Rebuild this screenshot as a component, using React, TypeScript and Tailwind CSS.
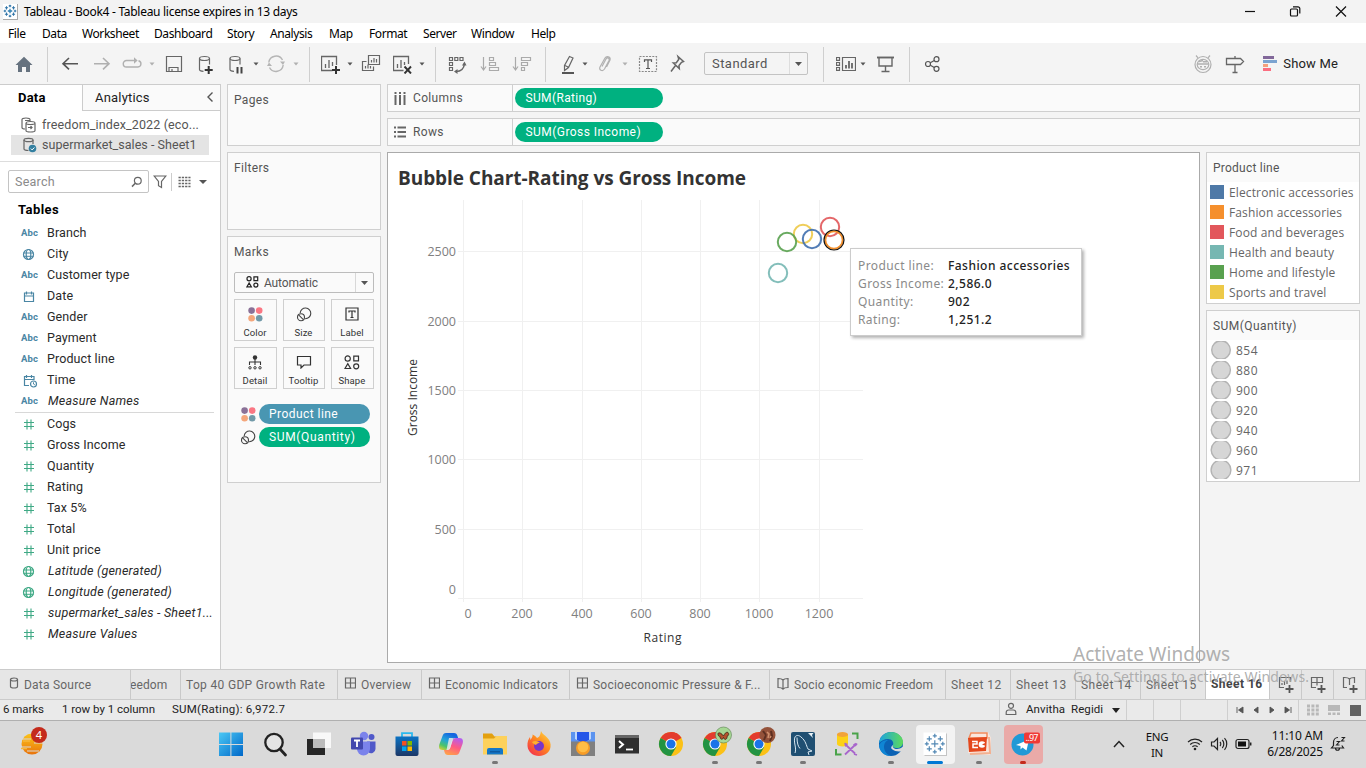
import type { ReactNode } from "react";

const UI = "font-['Roboto',sans-serif]";
const WIN = "font-['Noto_Sans',sans-serif]";

type IconProps = { children: ReactNode; c?: string; w?: number; h?: number; cls?: string };
const Ic = ({ children, c = "#666", w = 20, h = 20, cls = "" }: IconProps) => (
  <svg width={w} height={h} viewBox={`0 0 ${w} ${h}`} fill="none" stroke={c} strokeWidth="1.2" className={`block shrink-0 ${cls}`}>
    {children}
  </svg>
);
const Caret = ({ cls = "", c = "#555" }: { cls?: string; c?: string }) => (
  <Ic w={6} c="none" cls={cls}><path d="M0.5 8.5h5L3 11.5z" fill={c} /></Ic>
);
const Divider = ({ cls }: { cls: string }) => <div className={`-mt-[7px] h-[35px] w-px shrink-0 bg-[#cfcfcf] ${cls}`} />;

function TableauMark({ size, cls = "" }: { size: number; cls?: string }) {
  return (
    <svg width={size} height={size} viewBox="0 0 22 22" stroke="#2f74a8" strokeWidth="1.7" className={`block shrink-0 ${cls}`}>
      <path d="M11 7.500v7M7.500 11h7" strokeWidth="2" stroke="#2f7fb3" />
      <path d="M11 1v4M9 3h4M11 17v4M9 19h4M3 9v4M1 11h4M19 9v4M17 11h4" />
      <path d="M5.500 3.500v5M3 6h5M16.500 3.500v5M14 6h5M5.500 13.500v5M3 16h5M16.500 13.500v5M14 16h5" />
    </svg>
  );
}

function TitleBar() {
  return (
    <div className={`flex h-[23px] items-center bg-[#f3f3f3] ${WIN}`}>
      <div className="ml-[3px] flex h-4 w-[15px] items-center justify-center border-r border-b border-[#aaa] bg-white">
        <TableauMark size={14} />
      </div>
      <span className="ml-[6px] text-[12px] tracking-[-0.29px] text-black">Tableau - Book4 - Tableau license expires in 13 days</span>
      <Ic c="#111" w={12} h={12} cls="ml-auto"><path d="M1 5.500h10" /></Ic>
      <Ic c="#111" w={12} h={12} cls="ml-[33px]"><rect x="1.500" y="3" width="7" height="7" rx="1" /><path d="M4 .8h5a1.800 1.800 0 0 1 1.800 1.800v5" /></Ic>
      <Ic c="#111" w={12} h={12} cls="mr-[19px] ml-[34px]"><path d="M1 .5l10 10M11 .5L1 10.500" /></Ic>
    </div>
  );
}

function MenuBar() {
  return (
    <div className={`flex h-5 items-center bg-white pt-px text-[12px] tracking-[-0.42px] text-black ${WIN}`}>
      <span className="ml-2 w-[34px]">File</span><span className="w-10">Data</span><span className="w-[72px]">Worksheet</span>
      <span className="w-[73px]">Dashboard</span><span className="w-[43px]">Story</span><span className="w-[59px]">Analysis</span>
      <span className="w-10">Map</span><span className="w-[54px]">Format</span><span className="w-12">Server</span>
      <span className="w-[60px]">Window</span><span>Help</span>
    </div>
  );
}

function Toolbar() {
  return (
    <div className={`flex h-[41px] items-start bg-[#f4f4f4] pt-[11px] ${UI}`}>
      <Ic c="none" cls="ml-[14px]"><path d="M1.500 11L10 2.700 18.500 11H16v7h-4v-5H8v5H4v-7z" fill="#66727f" /></Ic>
      <Divider cls="ml-[13px]" />
      <Ic c="#555" cls="ml-3"><path d="M18 9.700H3M9 4L3 9.700l6 5.700" strokeWidth="1.600" /></Ic>
      <Ic c="#b0b0b0" cls="ml-3"><path d="M2 9.700h15M11 4l6 5.700-6 5.700" strokeWidth="1.600" /></Ic>
      <Ic c="#b0b0b0" cls="ml-[10px]"><path d="M7.500 6.500h-3a3.200 3.200 0 0 0 0 6.500h11.500a3.200 3.200 0 0 0 .5-6.300M7.500 6.500h6.500" strokeWidth="1.400" /><path d="M12 3.200l3.600 3.300L12 9.800z" fill="#b0b0b0" stroke="none" /></Ic>
      <Caret cls="ml-[7px]" c="#b0b0b0" />
      <Ic cls="ml-[9px]"><path d="M2.500 2.500h15v15h-15zM5 17v-3.500h9V17M8 17v-2" /></Ic>
      <Ic cls="ml-3"><ellipse cx="8.500" cy="4.500" rx="5" ry="2" /><path d="M3.500 4.500v11c0 1 2 1.700 4 1.900M13.500 4.500v6" /><path d="M12.700 12v8M8.700 16h8" stroke="#333" strokeWidth="2" /></Ic>
      <Ic cls="ml-[10px]"><ellipse cx="9" cy="4.500" rx="5" ry="2" /><path d="M4 4.500v11c0 1 2 1.700 4 1.900M14 4.500v6" /><path d="M11.500 13v6.500M15.500 13v6.500" stroke="#444" strokeWidth="2" /></Ic>
      <Caret cls="ml-[7px]" />
      <Ic c="#b5b5b5" cls="ml-[7px]"><path d="M2.800 8.500A7.300 7.300 0 0 1 16.500 6M17.200 11A7.300 7.300 0 0 1 3.500 13.500" strokeWidth="1.400" /><path d="M14 7.500h5L17 11zM1 12h5L3 8.500z" fill="#b5b5b5" stroke="none" /></Ic>
      <Caret cls="ml-[7px]" c="#b0b0b0" />
      <Divider cls="ml-[10px]" />
      <Ic cls="ml-[11px]"><path d="M15.500 11V2.500h-15v14h11M4.500 14V10M8 14V6M11.500 12V8" strokeWidth="1.300" /><path d="M15 12v8M11 16h8" stroke="#333" strokeWidth="2" /></Ic>
      <Caret cls="ml-[6px]" />
      <Ic cls="ml-2"><path d="M7.500 1.500h11v9h-11zM10.500 8.500V6M13 8.500V4M15.500 8.500V5M5.500 7.500h-4v9h11v-4M4.500 14.500V12M7 14.500V10.500M9.500 14.500V12" /></Ic>
      <Ic cls="ml-3"><path d="M15.500 10V2.500h-15v14h10M4.500 14V10M8 14V6M11.500 11V8" strokeWidth="1.300" /><path d="M11.500 12.500l6.500 7M18 12.500l-6.500 7" stroke="#333" strokeWidth="1.900" /></Ic>
      <Caret cls="ml-[6px]" />
      <Divider cls="ml-[10px]" />
      <Ic cls="ml-[11px]"><path d="M2.500 3.500h3v3h-3zM7.800 3.500h3v3h-3zM13 3.500h3v3h-3zM2.500 8.500h3v3h-3zM2.500 13.500h3v3h-3z" /><path d="M9 17.500c5 0 8-3 8.500-8" strokeWidth="1.500" /><path d="M7 17.500l3.500-2.500v5zM17.500 7.500l2 4H15z" fill="#666" stroke="none" /></Ic>
      <Ic c="#aaa" cls="ml-[13px]"><path d="M3.500 3v12M1 12.500l2.500 3.500L6 12.500M9.500 3.500h4v3h-4zM9.500 8.500h6v3h-6zM9.500 13.500h9v3h-9z" /></Ic>
      <Ic c="#aaa" cls="ml-3"><path d="M3.500 3v12M1 12.500l2.500 3.500L6 12.500M9.500 3.500h9v3h-9zM9.500 8.500h6v3h-6zM9.500 13.500h3v3h-3z" /></Ic>
      <Divider cls="ml-[13px]" />
      <Ic cls="ml-3"><path d="M11.500 2.500l3.500 1.500-4.500 9.500-4 3 0-5zM7 11.500l3.500 1.700" /><path d="M4 19h12" strokeWidth="2" stroke="#555" /></Ic>
      <Caret cls="ml-1" />
      <Ic c="#b0b0b0" cls="ml-[7px]"><path d="M7 12.500l4-7.500c1.300-2 4-.8 3 1.500l-4.500 8.500c-2 3-6 1-4.500-2l5-9c1.500-2.500 6-1.500 5 2l-3.500 7" /></Ic>
      <Caret cls="ml-[7px]" c="#b0b0b0" />
      <Ic cls="ml-[10px]"><path d="M1.500 2.500h17v15h-17z" strokeDasharray="2 1.200" stroke="#888" /><path d="M6.500 8V5.800h7V8M10 6v8.500M8 14.500h4" stroke="#555" /></Ic>
      <Ic cls="ml-[9px]"><path d="M11 2.500l5.500 5-2 .8-2.500 3.200.3 3-6-5.500 3-.2 2.500-3.500zM8.500 11.500L4 17.500" strokeWidth="1.500" /></Ic>
      <div className="-mt-[2px] ml-[17px] flex h-[23px] w-[104px] items-center rounded-[2px] border border-[#c3c3c3] pl-[7px] text-[13px] tracking-[0.450px] text-[#555]">
        Standard
        <div className="ml-auto flex h-full w-[18px] items-center justify-center border-l border-[#ddd]"><svg width="7" height="4" className="block"><path d="M0 0h7L3.500 4z" fill="#555" /></svg></div>
      </div>
      <Divider cls="ml-[15px]" />
      <Ic cls="ml-3"><path d="M.5 3.500h3v2.800h-3zM.5 8.500h3v2.800h-3zM.5 13.500h3v2.800h-3zM6.500 3.500h13v13h-13z" /><path d="M10 14.500v-3.500M13 14.500V7M16 14.500V9" strokeWidth="1.800" /></Ic>
      <Caret cls="ml-1" />
      <Ic cls="ml-[10px]"><path d="M1 3.500h17" strokeWidth="1.900" /><path d="M3 3.500v8.500h13V3.500M9.500 12v5.500M5.500 17.500h8" strokeWidth="1.400" /></Ic>
      <Divider cls="ml-[13px]" />
      <Ic c="#555" cls="ml-3"><circle cx="6" cy="10" r="2.500" /><circle cx="14.500" cy="5.200" r="2.500" /><circle cx="14.500" cy="14.800" r="2.500" /><path d="M8.300 8.800l4-2.300M8.300 11.200l4 2.300" /></Ic>
      <Ic c="#b0b0b0" cls="ml-auto"><circle cx="10" cy="10.500" r="8" /><ellipse cx="10" cy="10.500" rx="5.800" ry="5.200" /><path d="M3 1.500l2 2.300M17 1.500l-2 2.300" /><path d="M4.500 10h11M7 12.700h2M11 12.700h2M6 7.500l4-1M10 7.700h4" strokeWidth="1.600" /></Ic>
      <Ic cls="ml-3"><path d="M1.500 4.500h14l3 3-3 3h-14zM10 2v2.500M10 10.500v8M7.500 18.500h5" strokeWidth="1.300" /></Ic>
      <svg width="14" height="20" className="ml-[18px] block shrink-0"><path d="M0 2h11v3H0z" fill="#82689a" /><path d="M0 6h14v3H0z" fill="#7ba3d0" /><path d="M0 10h5v3H0z" fill="#f4a07c" /><path d="M0 14h8v3H0z" fill="#fb6e80" /></svg>
      <span className="mr-[28px] ml-[6px] text-[13px] leading-[19px] tracking-[0.170px] whitespace-nowrap text-[#222]">Show Me</span>
    </div>
  );
}

const Abc = () => <span className="w-5 text-[9.500px] font-bold tracking-[0.100px] text-[#4a86a4]">Abc</span>;
const Globe = ({ c }: { c: string }) => (
  <span className="w-5"><Ic c={c} w={13} h={13} cls="ml-[1px]"><circle cx="6.500" cy="6.500" r="5" /><ellipse cx="6.500" cy="6.500" rx="2.300" ry="5" /><path d="M1.500 5h10M1.500 8.300h10" strokeWidth="1" /></Ic></span>
);
const Hash = () => <span className="w-5"><Ic c="#3fa985" w={12} h={12} cls="ml-[2px]"><path d="M4 .5v10M8 .5v10M1 3.500h10M1 7.500h10" strokeWidth="1.100" /></Ic></span>;
const Cal = ({ clock }: { clock?: boolean }) => (
  <span className="w-5"><Ic c="#4a86a4" w={15} h={14} cls="ml-[2px]">
    {clock ? <><path d="M11 6V2.500H1.500v9H6M1.500 5.500H11M3.500 1v3M8.500 1v3" /><circle cx="10.500" cy="10" r="3" /><path d="M10.500 8.300V10l1.300.8" strokeWidth="1" /></> : <path d="M1.500 3h9v8.500h-9zM1.500 6h9M3.500 1.500v3M8.500 1.500v3" />}
  </Ic></span>
);
const Row = ({ icon, t, it }: { icon: ReactNode; t: string; it?: boolean }) => (
  <div className="flex h-[21px] items-center pl-[21px]">{icon}<span className={`whitespace-nowrap ${it ? "ml-[7px] tracking-[0.220px] italic" : "ml-[6px] tracking-[0.100px]"}`}>{t}</span></div>
);

function DataPane() {
  return (
    <aside className={`flex w-[221px] shrink-0 flex-col border-t border-r border-[#ccc] bg-white text-[12.500px] text-[#2a2a2a] ${UI}`}>
      <div className="flex h-[26px] text-[13px]">
        <div className="w-[82px] pt-[2px] pl-[18px] leading-[21px] font-bold tracking-[0.200px] text-black">Data</div>
        <div className="flex flex-1 items-center border-b border-l border-[#ccc] bg-[#fafafa] pl-3 tracking-[0.200px] text-[#222]">
          Analytics
          <Ic c="#555" w={8} h={12} cls="mr-[6px] mb-[2px] ml-auto"><path d="M6.500 1.500L2 6l4.500 4.500" strokeWidth="1.400" /></Ic>
        </div>
      </div>
      <div className="flex h-[51px] flex-col border-b border-[#ddd] pt-1 text-[#555]">
        <div className="mx-[11px] flex h-5 items-center pl-[10px]">
          <Ic w={15} h={16}><path d="M9 4V2.500C9 1.500 7.500 1 5 1S1 1.500 1 2.500v8C1 11.500 2 12 4 12M4 3.500h5M5 6.500C5 5 7 4.500 9.500 4.500s4.500.5 4.500 1.500-2 1.500-4.500 1.500S5 7 5 6zM5 6.500v7c0 1 2 1.500 4.500 1.500s4.500-.5 4.500-1.500v-7" /><path d="M7 10.500h4M9.500 9l1.500 1.500L9.500 12" /></Ic>
          <span className="ml-[6px] tracking-[0.130px]">freedom_index_2022 (eco...</span>
        </div>
        <div className="mx-[11px] flex h-5 items-center bg-[#e4e4e4] pl-3">
          <Ic w={14} h={16}><path d="M5.500 13.500C3 13.500 1 13 1 12V3M10 7V3" /><ellipse cx="5.500" cy="3" rx="4.500" ry="1.700" /><circle cx="9.500" cy="11.500" r="3.800" fill="#337fa0" stroke="none" /><path d="M7.800 11.600l1.300 1.300 2.300-2.400" stroke="#fff" strokeWidth="1" /></Ic>
          <span className="ml-[5px] tracking-[0.040px] whitespace-nowrap">supermarket_sales - Sheet1</span>
        </div>
      </div>
      <div className="flex h-[39px] items-center pl-2">
        <div className="flex h-[23px] w-[141px] items-center rounded-[2px] border border-[#c4c4c4] pt-px pl-[6px] tracking-[0.250px] text-[#8a8a8a]">
          Search
          <Ic w={12} h={12} cls="mr-[5px] ml-auto"><circle cx="6.800" cy="4.800" r="3.400" /><path d="M4.300 7.300L1 10.600" strokeWidth="1.500" /></Ic>
        </div>
        <Ic w={14} h={14} cls="ml-1"><path d="M1.200 1h11.600L8.500 6.500v6l-3-1.800V6.500z" /></Ic>
        <div className="ml-[4px] h-[18px] w-px bg-[#ccc]" />
        <Ic w={13} h={12} cls="ml-[6px]"><path d="M.5 1.500h12M.5 4.500h12M.5 7.500h12M.5 10.500h12" strokeDasharray="2.300 1" strokeWidth="1.300" /></Ic>
        <svg width="8" height="4" className="ml-2 block"><path d="M0 0h8L4 4z" fill="#555" /></svg>
      </div>
      <div className="h-[22px] pl-[18px] text-[13px] leading-[18px] font-bold tracking-[0.450px] text-black">Tables</div>
      <Row icon={<Abc />} t="Branch" /><Row icon={<Globe c="#4a86a4" />} t="City" /><Row icon={<Abc />} t="Customer type" />
      <Row icon={<Cal />} t="Date" /><Row icon={<Abc />} t="Gender" /><Row icon={<Abc />} t="Payment" />
      <Row icon={<Abc />} t="Product line" /><Row icon={<Cal clock />} t="Time" /><Row icon={<Abc />} t="Measure Names" it />
      <div className="mr-[6px] ml-[15px] h-[2px] border-t border-[#d8d8d8]" />
      <Row icon={<Hash />} t="Cogs" /><Row icon={<Hash />} t="Gross Income" /><Row icon={<Hash />} t="Quantity" />
      <Row icon={<Hash />} t="Rating" /><Row icon={<Hash />} t="Tax 5%" /><Row icon={<Hash />} t="Total" />
      <Row icon={<Hash />} t="Unit price" /><Row icon={<Globe c="#3fa985" />} t="Latitude (generated)" it />
      <Row icon={<Globe c="#3fa985" />} t="Longitude (generated)" it />
      <Row icon={<Hash />} t="supermarket_sales - Sheet1..." it /><Row icon={<Hash />} t="Measure Values" it />
    </aside>
  );
}

const Dots = () => (
  <svg width="15" height="15" className="block shrink-0"><circle cx="3.600" cy="3.600" r="3.300" fill="#8a7197" /><circle cx="11.200" cy="3.600" r="3.300" fill="#fa7683" /><circle cx="3.600" cy="11.200" r="3.300" fill="#f4a67b" /><circle cx="11.200" cy="11.200" r="3.300" fill="#7199a8" /></svg>
);
const SizeIc = ({ c = "#444" }: { c?: string }) => (
  <Ic w={16} h={16} c={c}><path d="M4.200 7a5.300 5.300 0 1 1 5 5.600" strokeWidth="1.100" /><circle cx="5" cy="11.200" r="3.500" strokeWidth="1.100" /><path d="M2.600 8.800l4.800 4.800" strokeWidth="1.100" /></Ic>
);
const ShapeIc = () => (
  <Ic w={16} h={15} c="#333"><circle cx="3.700" cy="3.500" r="2.600" /><path d="M9.800 1.200h4.700v4.700H9.800zM1 13.500h5.600L3.800 8.600z" /><circle cx="12.200" cy="11.300" r="2.500" /></Ic>
);
const MarkBtn = ({ icon, t, cls }: { icon: ReactNode; t: string; cls: string }) => (
  <div className={`flex h-[42px] flex-col items-center border border-[#cfcfcf] pt-[6px] text-[9.500px] text-[#333] ${cls}`}>
    <div className="-ml-px flex h-4 items-center">{icon}</div>
    <span className="mt-[5px] -ml-px leading-[12px] tracking-[0.100px]">{t}</span>
  </div>
);
const Card = ({ t, cls, children }: { t: string; cls: string; children?: ReactNode }) => (
  <section className={`border border-[#cfcfcf] bg-[#fafafa] text-[12px] text-[#555] ${cls}`}>
    <h2 className="pt-[6px] pl-[6px] leading-[18px] tracking-[0.330px]">{t}</h2>
    {children}
  </section>
);

function Cards() {
  return (
    <div className={`ml-[6px] flex w-[154px] shrink-0 flex-col ${UI}`}>
      <Card t="Pages" cls="h-[62px]" />
      <Card t="Filters" cls="mt-[6px] h-[78px]" />
      <Card t="Marks" cls="mt-[6px] h-[247px]">
        <div className="mt-[11px] ml-[6px] flex h-[21px] w-[140px] items-center rounded-[2px] border border-[#bcbcbc] pl-[11px]">
          <svg width="13" height="12" viewBox="0 0 16 15" fill="none" stroke="#222" strokeWidth="1.500" className="mb-px block"><circle cx="3.700" cy="3.500" r="2.600" /><path d="M9.800 1.200h4.700v4.700H9.800zM1 13.500h5.600L3.800 8.600z" /><circle cx="12.200" cy="11.300" r="2.500" /></svg>
          <span className="ml-[5px] pt-px text-[12px] tracking-[-0.160px]">Automatic</span>
          <div className="ml-auto flex h-full w-[18px] items-center justify-center border-l border-[#d8d8d8]"><svg width="7" height="4" className="block"><path d="M0 0h7L3.500 4z" fill="#555" /></svg></div>
        </div>
        <div className="mt-[6px] ml-[6px] flex gap-[6px]">
          <MarkBtn cls="w-[43px]" t="Color" icon={<Dots />} />
          <MarkBtn cls="w-[42px]" t="Size" icon={<SizeIc />} />
          <MarkBtn cls="w-[43px]" t="Label" icon={<Ic w={14} h={14} c="#333"><path d="M1 1h12v12H1zM4 5.500V4h6v1.500M7 4v6.500M5.500 10.500h3" /></Ic>} />
        </div>
        <div className="mt-[6px] ml-[6px] flex gap-[6px]">
          <MarkBtn cls="w-[43px]" t="Detail" icon={<Ic w={14} h={15} c="#333"><circle cx="7" cy="2.500" r="2.200" fill="#333" stroke="none" /><path d="M7 4v6M1.500 10V7h11v3" strokeWidth="1.100" /><circle cx="2" cy="12.800" r="1.200" strokeWidth="1" /><circle cx="7" cy="12.800" r="1.200" strokeWidth="1" /><circle cx="12" cy="12.800" r="1.200" strokeWidth="1" /></Ic>} />
          <MarkBtn cls="w-[42px]" t="Tooltip" icon={<Ic w={16} h={14} c="#333"><path d="M1.500 1.500h13v8.500H8l-3 3V10H1.500z" strokeWidth="1.200" /></Ic>} />
          <MarkBtn cls="w-[43px]" t="Shape" icon={<ShapeIc />} />
        </div>
        <div className="mt-[15px] flex h-5 items-center pl-[13px]">
          <Dots /><span className="ml-[3px] h-5 w-[111px] rounded-full bg-[#4996b2] pl-[10px] text-[12px] leading-5 tracking-[0.450px] text-white">Product line</span>
        </div>
        <div className="mt-[3px] flex h-5 items-center pl-[12px]">
          <SizeIc /><span className="ml-[3px] h-5 w-[111px] rounded-full bg-[#00b180] pl-[10px] text-[12px] leading-5 tracking-[0.650px] text-white">SUM(Quantity)</span>
        </div>
      </Card>
    </div>
  );
}

const Shelf = ({ icon, t, pill, cls = "", tr }: { icon: ReactNode; t: string; pill: string; cls?: string; tr: string }) => (
  <div className={`flex h-[28px] items-center border border-[#cfcfcf] bg-[#fafafa] text-[12px] text-[#555] ${UI} ${cls}`}>
    <div className="flex h-full w-[125px] items-center border-r border-[#cfcfcf] pl-[6px]">{icon}<span className="ml-[6px] tracking-[0.350px]">{t}</span></div>
    <span className={`ml-[2px] h-5 w-[148px] rounded-full bg-[#00b180] pl-[10.500px] leading-5 text-white ${tr}`}>{pill}</span>
  </div>
);

const yTicks: [string, number][] = [["2500", 98.5], ["2000", 168.5], ["1500", 237.5], ["1000", 306.5], ["500", 376.5]];
const xTicks: [string, number][] = [["200", 134.5], ["400", 194.5], ["600", 253.5], ["800", 312.5], ["1000", 371.5], ["1200", 431.500]];
const bubbles: [number, number, string][] = [[415, 81, "#edc948"], [399, 89, "#59a14f"], [424, 86, "#3f6fae"], [442, 74, "#e15759"], [390, 120, "#76b7b2"]];

function Chart() {
  return (
    <svg width="811" height="509" className="block font-['Open_Sans',sans-serif]" fontSize="12.500">
      <text x="10" y="32" fontSize="19" fontWeight="700" fill="#333" textLength="348">Bubble Chart-Rating vs Gross Income</text>
      <path d="M75.500 47v402" stroke="#f0f0f0" />
      {xTicks.map(([t, x]) => <path key={t} d={`M${x} 47v402`} stroke="#f0f0f0" />)}
      {yTicks.map(([t, y]) => <path key={t} d={`M70 ${y}h405`} stroke="#f0f0f0" />)}
      <path d="M70 445.500h405" stroke="#f0f0f0" />
      <g fill="#808080" textAnchor="end">
        {yTicks.map(([t, y]) => <text key={t} x="68" y={y + 4.500}>{t}</text>)}
        <text x="68" y="441">0</text>
      </g>
      <g fill="#808080" textAnchor="middle">
        <text x="80" y="465">0</text>
        {xTicks.map(([t, x]) => <text key={t} x={x - 0.500} y="465">{t}</text>)}
      </g>
      <text x="255.500" y="489" textLength="38" fontSize="12" fill="#333">Rating</text>
      <text transform="translate(29 283) rotate(-90)" textLength="77" fontSize="12" fill="#333">Gross Income</text>
      {bubbles.map(([x, y, c]) => <circle key={c} cx={x} cy={y} r="9.200" fill="none" stroke={c} strokeWidth="2" strokeOpacity=".9" />)}
      <circle cx="446" cy="87" r="8.700" fill="none" stroke="#f28e2b" strokeWidth="2" />
      <circle cx="446" cy="87" r="10" fill="none" stroke="#111" strokeWidth="1.200" />
    </svg>
  );
}

const tip: [string, string][] = [["Product line:", "Fashion accessories"], ["Gross Income:", "2,586.0"], ["Quantity:", "902"], ["Rating:", "1,251.2"]];

function Tooltip() {
  return (
    <div className="absolute top-[95px] left-[462px] h-[88px] w-[232px] border border-[#ccc] bg-white pt-[8px] pl-[7px] font-['Noto_Sans',sans-serif] text-[12px] shadow-[2px_2px_3px_rgba(0,0,0,0.3)]">
      {tip.map(([k, v]) => (
        <div key={k} className="flex h-[18px] items-center whitespace-nowrap">
          <span className="w-[90px] tracking-[0.400px] text-[#8a8a8a]">{k}</span>
          <span className="font-medium tracking-[0.460px] text-[#222]">{v}</span>
        </div>
      ))}
    </div>
  );
}

const legend = [
  ["Electronic accessories", "bg-[#4e79a7]"], ["Fashion accessories", "bg-[#f58f2d]"], ["Food and beverages", "bg-[#e2575b]"],
  ["Health and beauty", "bg-[#76b7b2]"], ["Home and lifestyle", "bg-[#59a14f]"], ["Sports and travel", "bg-[#edc948]"],
];

function Legends() {
  return (
    <div className="ml-[6px] flex w-[154px] flex-col gap-[6px] text-[12px] text-[#666]">
      <section className="h-[152px] border border-[#cfcfcf] bg-white">
        <h2 className={`h-[29px] bg-[#fafafa] pt-[6px] pl-[6px] leading-[18px] tracking-[0.230px] text-[#555] ${UI}`}>Product line</h2>
        {legend.map(([t, c]) => (
          <div key={t} className="flex h-5 items-center pl-[3px] font-['Open_Sans',sans-serif] whitespace-nowrap">
            <span className={`mb-px h-[14px] w-[14px] ${c}`} /><span className="ml-[5px] pt-px tracking-[0.130px]">{t}</span>
          </div>
        ))}
      </section>
      <section className="h-[172px] border border-[#cfcfcf] bg-white">
        <h2 className={`h-[29px] bg-[#fafafa] pt-[6px] pl-[6px] leading-[18px] tracking-[0.450px] text-[#555] ${UI}`}>SUM(Quantity)</h2>
        {["854", "880", "900", "920", "940", "960", "971"].map((t, i) => (
          <div key={t} className="flex h-5 items-center pl-[3px] font-['Open_Sans',sans-serif]">
            <svg width="22" height="18" className="block"><circle cx="11" cy="9" r={9.300 + i * 0.100} fill="#d6d6d6" stroke="#b3b3b3" strokeWidth="1.400" /></svg>
            <span className="ml-1 pt-[2px] tracking-[0.500px]">{t}</span>
          </div>
        ))}
      </section>
    </div>
  );
}

const GridIc = () => <Ic w={12} h={12} cls="mr-[4px] mb-[3px]"><path d="M1.500 1h10v10h-10zM6.500 1v10M1.500 6h10" /></Ic>;
const BookIc = ({ cls = "" }: { cls?: string }) => <Ic w={12} h={13} cls={cls}><path d="M1 1.500c2 0 4 .3 5 1.500 1-1.200 3-1.500 5-1.500v9c-2 0-4 .3-5 1.500-1-1.200-3-1.500-5-1.500zM6 3v9" /></Ic>;
const Tab = ({ w, children, on }: { w: string; children: ReactNode; on?: boolean }) => (
  <div className={`flex h-full shrink-0 items-center overflow-hidden border-r border-[#c9c9c9] whitespace-nowrap ${w} ${on ? "bg-white font-bold text-[#444]" : ""}`}>{children}</div>
);
const NewIc = ({ children }: { children: ReactNode }) => <Ic w={18} h={18} cls="ml-[2px]">{children}<path d="M11.500 9v8M7.500 13h8" stroke="#555" strokeWidth="1.800" /></Ic>;

function SheetTabs() {
  return (
    <div className={`flex h-[30px] shrink-0 border-t border-[#cbcbcb] bg-[#e6e6e6] text-[12px] text-[#666] ${UI}`}>
      <Tab w="w-[131px] pl-[9px]"><Ic w={10} h={12} cls="mr-[5px] mb-[3px]"><ellipse cx="5" cy="2.500" rx="3.500" ry="1.500" /><path d="M1.500 2.500v7c0 .8 1.500 1.500 3.500 1.500s3.500-.7 3.500-1.500v-7" /></Ic><span className="tracking-[0.220px]">Data Source</span></Tab>
      <Tab w="w-[50px]"><span className="-ml-[1px] tracking-[0.100px]">eedom</span></Tab>
      <Tab w="w-[157px] pl-[5px]"><span className="tracking-[0.330px]">Top 40 GDP Growth Rate</span></Tab>
      <Tab w="w-[84px] pl-[6px]"><GridIc /><span className="ml-px tracking-[0.200px]">Overview</span></Tab>
      <Tab w="w-[148px] pl-[6px]"><GridIc /><span className="ml-px tracking-[0.200px]">Economic Indicators</span></Tab>
      <Tab w="w-[200px] pl-[6px]"><GridIc /><span className="ml-px tracking-[0.230px]">Socioeconomic Pressure &amp; F...</span></Tab>
      <Tab w="w-[176px] pl-[7px]"><BookIc cls="mr-[5px] mb-[2px]" /><span className="tracking-[0.150px]">Socio economic Freedom</span></Tab>
      <Tab w="w-[65px] pl-[5px]"><span className="tracking-[0.480px]">Sheet 12</span></Tab>
      <Tab w="w-[65px] pl-[5px]"><span className="tracking-[0.480px]">Sheet 13</span></Tab>
      <Tab w="w-[65px] pl-[5px]"><span className="tracking-[0.480px]">Sheet 14</span></Tab>
      <Tab w="w-[65px] pl-[5px]"><span className="tracking-[0.480px]">Sheet 15</span></Tab>
      <Tab w="w-[64px] pl-[5px]" on><span className="pb-px tracking-[0.480px]">Sheet 16</span></Tab>
      <Tab w="w-8 justify-center"><NewIc><path d="M12.500 6V1.500h-11v10H6M4 9V7M6.500 9V5M9 8V4.500" /></NewIc></Tab>
      <Tab w="w-8 justify-center"><NewIc><path d="M12.500 7V1.500h-11v10H6M7 1.500v8M1.500 6.500h11" /></NewIc></Tab>
      <Tab w="w-8 justify-center"><NewIc><path d="M12.500 7V1.500c-2 0-4 .3-5 1.500-1-1.200-3-1.500-5-1.500h-1v10H5M7.500 3v6" /></NewIc></Tab>
    </div>
  );
}

const Cell = ({ w }: { w: string }) => <div className={`h-full border-r border-[#cfcfcf] ${w}`} />;

function StatusBar() {
  return (
    <div className={`flex h-[21px] shrink-0 items-center border-t border-[#cbcbcb] bg-[#eaeaea] text-[11.500px] text-[#222] ${UI}`}>
      <span className="w-[59px] pl-[3px] tracking-[-0.050px]">6 marks</span><span className="ml-[3px] w-[110px] tracking-[-0.020px]">1 row by 1 column</span><span className="tracking-[0.250px]">SUM(Rating): 6,972.7</span>
      <div className="ml-auto flex h-full w-[128px] items-center border-r border-l border-[#cfcfcf]">
        <Ic w={12} h={14} cls="mb-[2px] ml-[5px]"><circle cx="6" cy="3.800" r="2.500" /><path d="M1.200 12.500v-2c0-1.700 1-2.500 2.500-2.500h4.600c1.500 0 2.500.8 2.500 2.500v2z" /></Ic>
        <span className="ml-[9px] tracking-[0.080px] whitespace-nowrap">Anvitha&nbsp; Regidi</span>
        <svg width="8" height="5" className="mr-[6px] ml-auto block"><path d="M0 0h8L4 5z" fill="#222" /></svg>
      </div>
      <Cell w="w-[27px]" /><Cell w="w-[27px]" /><Cell w="w-[47px]" />
      <div className="flex h-full w-[71px] items-center gap-[8px] border-r border-[#cfcfcf] pl-2">
        {["M1 1v6M7 1v6L2.500 4z", "M6 1v6L2 4z", "M2 1v6l4-3z", "M1 1v6l4.500-3zM7 1v6"].map((d) => <svg key={d} width="8" height="8" fill="#555" stroke="#555" strokeWidth=".9" className="block"><path d={d} /></svg>)}
      </div>
      <svg width="12" height="12" className="ml-2 block"><path d="M0 2h12M0 6h12M0 10h12" stroke="#b8b8b8" strokeWidth="3" strokeDasharray="3 1.400" /></svg>
      <svg width="12" height="12" className="ml-[9px] block" fill="#b8b8b8"><path d="M0 1h12v6H0zM0 8.500h3V11H0zM4.500 8.500h3V11h-3zM9 8.500h3V11H9z" /></svg>
      <div className="mr-[5px] ml-[10px] h-[11px] w-[11px] bg-[#636363]" />
    </div>
  );
}

const TaskIcon = ({ children, dot, cls = "" }: { children: ReactNode; dot?: string; cls?: string }) => (
  <div className="flex w-11 shrink-0 flex-col items-center">
    <div className={`mt-[4px] flex h-[39px] w-[39px] flex-col items-center rounded-[4px] ${cls}`}>
      <svg width="32" height="32" viewBox="0 0 32 32" fill="none" className="mt-[3px] block shrink-0 overflow-visible">{children}</svg>
      {dot && <span className={`mt-px h-[3px] rounded-full ${dot}`} />}
    </div>
  </div>
);
const gray = "w-[6px] bg-[#777]";
const Chrome = () => (
  <>
    <circle cx="16" cy="16" r="12" fill="#fbc116" />
    <path d="M16 16L5.600 10A12 12 0 0 1 26.400 10z" fill="#e33b2e" /><path d="M16 4a12 12 0 0 1 10.400 6H16z" fill="#e33b2e" />
    <path d="M16 16L5.600 10A12 12 0 0 0 16 28l5.200-9z" fill="#229342" />
    <circle cx="16" cy="16" r="5.600" fill="#fff" /><circle cx="16" cy="16" r="4.500" fill="#1a73e8" />
  </>
);

function Taskbar() {
  return (
    <div className={`flex h-12 shrink-0 border-t border-[#b0b0b0] bg-[#dadada] text-[12px] text-[#111] ${WIN}`}>
      <svg width="32" height="34" className="mt-[5px] ml-[18px] block">
        <defs><linearGradient id="sun" x1="0" y1="0" x2="0" y2="1"><stop stopColor="#fcc419" /><stop offset="1" stopColor="#e8730c" /></linearGradient></defs>
        <circle cx="14" cy="18" r="10.500" fill="url(#sun)" />
        <path d="M3 13h10M16 17h9M2 21h11M9 25h12" stroke="#dadada" strokeWidth="1.200" /><path d="M3 22.500h6M5 15h7" stroke="#f6b73c" strokeWidth="1.500" />
        <circle cx="21" cy="9" r="8" fill="#c42b1c" /><text x="21" y="13" fill="#fff" fontSize="11" textAnchor="middle">4</text>
      </svg>
      <div className="ml-[159px] flex">
        <TaskIcon><defs><linearGradient id="win" x1="0" y1="0" x2="1" y2="1"><stop stopColor="#4ac8f5" /><stop offset="1" stopColor="#0067c8" /></linearGradient></defs><path d="M4 4.500h11.400V16H4zM16.400 4.500H28V16H16.400zM4 17h11.400v11H4zM16.400 17H28v11H16.400z" fill="url(#win)" /></TaskIcon>
        <TaskIcon><circle cx="15" cy="14.500" r="8.700" stroke="#222" strokeWidth="2.300" fill="#e4e4e4" /><path d="M21 21l5.500 6" stroke="#222" strokeWidth="2.800" strokeLinecap="round" /></TaskIcon>
        <TaskIcon><path d="M4 11h18v16H4z" fill="#262626" /><path d="M10 4.500h18V20H10z" fill="#f8f8f8" /><path d="M10 11h12v9H10z" fill="#bbb" /></TaskIcon>
        <TaskIcon><circle cx="17" cy="8" r="4.200" fill="#7b83eb" /><circle cx="24.500" cy="9" r="3" fill="#5059c9" /><path d="M20 13.500h8.500V21a4.500 4.500 0 0 1-7 3.500z" fill="#5059c9" /><path d="M10 13.500h13V21a6.500 6.500 0 0 1-13 0z" fill="#7b83eb" /><rect x="4" y="9.500" width="12" height="12" rx="1" fill="#4248ae" /><path d="M7 12.500h6M10 12.500v6.500" stroke="#fff" strokeWidth="1.800" /></TaskIcon>
        <TaskIcon><defs><linearGradient id="st" x1="0" y1="0" x2="0" y2="1"><stop stopColor="#0b73c4" /><stop offset="1" stopColor="#1c3766" /></linearGradient></defs><path d="M11 9V5.200h10V9" stroke="#2cb9ee" strokeWidth="1.800" /><path d="M4.500 8.500h23V26a2 2 0 0 1-2 2h-19a2 2 0 0 1-2-2z" fill="url(#st)" /><path d="M11 13h4.500v4.500H11z" fill="#f25022" /><path d="M16.500 13H21v4.500h-4.500z" fill="#7fba00" /><path d="M11 18.500h4.500V23H11z" fill="#00a4ef" /><path d="M16.500 18.500H21V23h-4.500z" fill="#ffb900" /></TaskIcon>
        <TaskIcon><defs><linearGradient id="cp1" x1="0.500" y1="0" x2="0" y2="1"><stop stopColor="#1566e0" /><stop offset=".4" stopColor="#23a5d8" /><stop offset=".7" stopColor="#4cc46a" /><stop offset="1" stopColor="#f3d02c" /></linearGradient><linearGradient id="cp2" x1="0.700" y1="0" x2="0.300" y2="1"><stop stopColor="#b45cf0" /><stop offset=".5" stopColor="#ff5a82" /><stop offset="1" stopColor="#ffa04a" /></linearGradient></defs><path d="M11 5h8c2 0 3 1 3.500 3l.6 2h-3c-2 0-3 1-3.600 3L14.500 19c-.6 2-1.500 3-3.500 3H7.500C4 22 3.500 19 4.500 16L7.500 8c.7-2 1.500-3 3.500-3z" fill="url(#cp1)" /><path d="M21 27h-8c-2 0-3-1-3.500-3L9 22h3c2 0 3-1 3.500-3l2-6c.6-2 1.500-3 3.500-3h3.500c3.500 0 4 3 3 6l-3 8c-.7 2-1.500 3-3.500 3z" fill="url(#cp2)" /><path d="M14 10h4l-2.500 9c-.6 2-1.500 3-3 3h-1z" fill="#e9e9e9" opacity=".85" /></TaskIcon>
        <TaskIcon dot={gray}><path d="M4 5.500h9l2.500 3H28V14H4z" fill="#e3a00f" /><path d="M4 10.500h11L17.500 8H28v18.500H4z" fill="#fdd15b" /><path d="M8 26.500V22q0-2 2-2h12q2 0 2 2v4.500z" fill="#1477c8" /><path d="M11 23h10v1.500H11z" fill="#0d5aa0" /></TaskIcon>
        <TaskIcon><defs><linearGradient id="ff" x1="1" y1="0" x2="0.200" y2="1"><stop stopColor="#ffe14a" /><stop offset=".5" stopColor="#ff8a1f" /><stop offset="1" stopColor="#f3304d" /></linearGradient></defs><path d="M18 3c1 3 4 4 6.500 7 2.500 2.800 3.500 5.500 3 9-.8 5.500-5.500 9-11.500 9S5 24 4.500 18c-.3-4 1-7 2.500-9l.5 3C9 9.500 10 8 9.500 6.500c2 .8 3.500 2 4.500 3.500 3-1 3.500-4 4-7z" fill="url(#ff)" /><circle cx="16" cy="18" r="5" fill="#7a35c9" /><path d="M9 14c3-2 6-1 8 1-2 0-3 .5-4 2 0 0-3-1-4-3z" fill="#ffb02e" /></TaskIcon>
        <TaskIcon><path d="M4 4h24v24H4z" fill="#808080" /><path d="M4 4h24v9.500H4z" fill="#5b93ef" /><path d="M8 4h5v9.500L8 11zM19 4h5v7l-5 2.500z" fill="#bcd6ff" /><path d="M10 4h12v8l-6 3-6-3z" fill="#2456e8" /><circle cx="16" cy="20" r="7" fill="#f79c26" /><circle cx="16" cy="19" r="5.300" fill="#ffbd45" /></TaskIcon>
        <TaskIcon><path d="M4 7h24v18.500H4z" fill="#2f2f2f" /><path d="M4 7h24v3H4z" fill="#666" /><path d="M8 13l4 3.500L8 20" stroke="#fff" strokeWidth="2" /><path d="M15 21.500h7" stroke="#fff" strokeWidth="1.800" /></TaskIcon>
        <TaskIcon><Chrome /></TaskIcon>
        <TaskIcon dot={gray}><Chrome /><circle cx="24.500" cy="7" r="8" fill="#a6d894" /><circle cx="24.500" cy="7" r="8" stroke="#5c7f54" strokeWidth=".6" /><path d="M24.500 8c-2-3-5-4-5.500-2.500s1 3.500 2.500 3.500c-1 2 2 3.500 3 .5 1 3.500 4 1.500 3.500-1 2-1 2-3 1-4-2-1-3.500 1.500-4.500 3.500z" fill="#b3542c" stroke="#3a2417" strokeWidth=".8" /></TaskIcon>
        <TaskIcon dot={gray}><Chrome /><circle cx="24.500" cy="7" r="8" fill="#94523a" /><path d="M20 3l3 4M21 12l2-5M28 3l1 5-2 5" stroke="#5d3022" strokeWidth="2" /><path d="M24 4l2 2-1 4M27 10l1-2" stroke="#d0926f" strokeWidth="1.500" /></TaskIcon>
        <TaskIcon dot={gray}><rect x="4" y="4" width="24" height="24" rx="2" fill="#1f4f72" /><path d="M8 25C10 20 6 14 8 9c1-2 4-2 6 0 5 4 5 8 7 12l4 2-4 1 1 3M10 9.500c0 5 1 9 3 11" stroke="#d8e8f2" strokeWidth="1" /><path d="M21 5l5 5-1-3 1.500-2z" fill="#e8f2f8" /></TaskIcon>
        <TaskIcon><path d="M6 6v10c0 1.500 2.500 2.500 5.500 2.500S17 17.500 17 16V6z" fill="#fcd116" /><ellipse cx="11.500" cy="6.500" rx="5.500" ry="2.500" fill="#f2a33a" /><path d="M21 5.500h5.500V11M5 21v5.500h5.500" stroke="#4aa34a" strokeWidth="2" /><path d="M15 17l9 8.500M24 17l-10 9.500M13.500 15.500l3 1M14 15l1 3.500M22.500 17.500l2.500-2M24 18l2-2.500M23 26l3 1" stroke="#a866cc" strokeWidth="1.800" /></TaskIcon>
        <TaskIcon dot={gray}><defs><linearGradient id="ed" x1="0" y1="0" x2="1" y2="0"><stop stopColor="#1ba3e0" /><stop offset="1" stopColor="#5edb5a" /></linearGradient></defs><circle cx="16" cy="16" r="12" fill="#0b62b4" /><path d="M4 15C5 8 10 4 16 4c7 0 12 5 12 10 0 4-3 6-6 6s-5-1-4-3c1-3-1-6-5-6-4 0-7 2-9 4z" fill="url(#ed)" /><path d="M18 17c-1 2 1 4 4 4 2 0 4-1 5.500-2l2 0-2 4c-3 1-8 .5-10-1.500-2-1-1.500-3 .5-4.500z" fill="#dadada" /><path d="M13 12c-4 2-5 7-3 11 1 2 3 4 6 5-7 0-11-4-12-10 1-4 5-6 9-6z" fill="#0f85d4" /></TaskIcon>
        <TaskIcon dot="w-4 bg-[#0078d4]" cls="bg-[#f3f3f3]"><path d="M5.500 5.500h22.500v22.500H5.500z" fill="#c4c4c4" /><path d="M4.500 4.500h22.500v22.500H4.500z" fill="#fff" /><g transform="translate(4.800 4.800)" strokeWidth="1.200" stroke="#5288b4"><path d="M11 7.500v7M7.500 11h7M11 1v4M9 3h4M11 17v4M9 19h4M3 9v4M1 11h4M19 9v4M17 11h4M5.500 3.500v5M3 6h5M16.500 3.500v5M14 6h5M5.500 13.500v5M3 16h5M16.500 13.500v5M14 16h5" /></g></TaskIcon>
        <TaskIcon dot={gray}><path d="M8 4h17l3 6-1 17L5 25z" fill="#fbe6dc" /><path d="M8 5h16v5H6z" stroke="#ef8a5c" strokeWidth="1.500" /><path d="M26 9l1 16-20 1" stroke="#f3b090" strokeWidth="2" /><path d="M5 10l19-1-1 14-17 1z" fill="#e4481d" /><path d="M9 13.500h5v2.500H9.500M14.500 16H10v3.500h5" stroke="#fff" strokeWidth="1.500" /><circle cx="19" cy="16.500" r="3.300" fill="#fff" /><path d="M19 16.500l4-2v3.500z" fill="#e4481d" /></TaskIcon>
        <TaskIcon dot="w-[6px] bg-[#c42b1c]" cls="bg-[#eaaaa8]"><circle cx="15.500" cy="16.500" r="11" fill="#2199d6" /><path d="M9 17l13-5.500-2.500 11-4-3-2 2v-3.500z" fill="#fff" /><rect x="17" y="4.500" width="16" height="11" rx="2" fill="#f03a36" /><text x="25" y="13.300" fill="#fff" fontSize="9" textAnchor="middle" textLength="13">..97</text></TaskIcon>
      </div>
      <Ic w={12} h={12} c="#222" cls="mt-[17px] ml-auto"><path d="M1 9l5-5.500L11 9" strokeWidth="1.500" /></Ic>
      <div className="mt-[8px] ml-[17px] w-[30px] text-center text-[11.500px] leading-4 tracking-[-0.300px]"><div>ENG</div><div>IN</div></div>
      <Ic w={16} h={16} c="#222" cls="mt-[15px] ml-[15px]"><path d="M1 6a10 10 0 0 1 14 0M3.200 8.500a6.800 6.800 0 0 1 9.600 0M5.400 10.800a3.700 3.700 0 0 1 5.200 0" /><circle cx="8" cy="13" r="1.300" fill="#222" stroke="none" /></Ic>
      <Ic w={18} h={16} c="#222" cls="mt-[15px] ml-[7px]"><path d="M1.500 6h2.500l3.500-3.500v11L4 10H1.500zM10 6c1 1 1 3 0 4M12.300 4c2 2 2 6 0 8M14.500 2.200c3 3 3 8.600 0 11.600" /></Ic>
      <Ic w={17} h={12} c="#222" cls="mt-[17px] ml-[7px]"><rect x="1" y="1.500" width="13" height="9" rx="2" /><path d="M3 3.500h8v5H3z" fill="#111" stroke="none" /><path d="M15.700 4.500v3" strokeWidth="1.500" /></Ic>
      <div className="mt-[7px] ml-[11px] w-[60px] text-right text-[12px] leading-4 tracking-[-0.150px]"><div>11:10 AM</div><div>6/28/2025</div></div>
      <Ic w={16} h={16} c="#222" cls="mt-[15px] mr-[20px] ml-[7px]"><path d="M8 1.500C5 1.500 3.500 4 3.500 6.500v3L1.500 12h12l-1.700-2.500M5.500 12c0 3 4 3 4 0" /><path d="M6.500 5.500h3L6.500 9h3M11.500 1.500h3l-3 3.500h3" strokeWidth="1.100" /></Ic>
    </div>
  );
}

export default function App() {
  return (
    <div className="relative flex h-[768px] w-[1366px] flex-col overflow-hidden bg-[#f4f4f4]">
      <TitleBar />
      <MenuBar />
      <Toolbar />
      <div className="flex h-[585px] shrink-0">
        <DataPane />
        <Cards />
        <div className="mr-[6px] ml-[6px] flex flex-1 flex-col">
          <Shelf t="Columns" pill="SUM(Rating)" tr="tracking-[0.350px]" icon={<Ic w={13} h={13} c="#666"><path d="M1.500 0v2M1.500 3v10M6 0v2M6 3v10M10.500 0v2M10.500 3v10" strokeWidth="2" /></Ic>} />
          <Shelf cls="mt-[6px]" t="Rows" pill="SUM(Gross Income)" tr="tracking-[0.450px]" icon={<Ic w={13} h={13} c="#666"><path d="M0 1.500h2M3.500 1.500H12M0 6h2M3.500 6H12M0 10.500h2M3.500 10.500H12" strokeWidth="2" /></Ic>} />
          <div className="mt-[6px] flex">
            <div className="relative h-[511px] w-[813px] border border-[#aaa] bg-white"><Chart /><Tooltip /></div>
            <Legends />
          </div>
        </div>
      </div>
      <SheetTabs />
      <StatusBar />
      <Taskbar />
      <div className="pointer-events-none absolute top-[641px] left-[1073px] font-['Noto_Sans',sans-serif] whitespace-nowrap text-[#a6a6a6]/90">
        <div className="text-[19px] leading-[26px]">Activate Windows</div>
        <div className="text-[14px] leading-[19px] tracking-[0.120px]">Go to Settings to activate Windows.</div>
      </div>
    </div>
  );
}
